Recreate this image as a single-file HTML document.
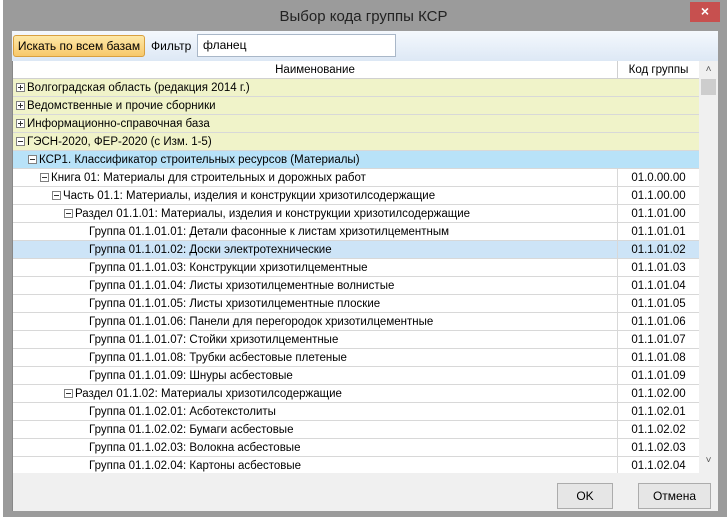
<!DOCTYPE html><html><head><meta charset="utf-8"><style>
*{box-sizing:border-box;margin:0;padding:0}
body{width:727px;height:517px;overflow:hidden;background:#fff;font-family:"Liberation Sans","DejaVu Sans",sans-serif;font-size:11.5px;color:#000;position:relative}
.a{position:absolute}
.row{position:absolute;left:13px;width:686px;height:18px;border-bottom:1px solid #d8d8d8;white-space:nowrap;line-height:19px}
.row .c{position:absolute;left:604px;top:0;width:82px;height:18px;border-left:1px solid #d8d8d8;text-align:center}
.row .t{position:absolute;top:0}
.pm{display:inline-block;width:9px;height:9px;border:1px solid #808080;position:relative;vertical-align:-1px;margin-right:2px;background:#fff}
.pm:before{content:"";position:absolute;left:1px;top:3px;width:5px;height:1px;background:#333}
.pm.p:after{content:"";position:absolute;left:3px;top:1px;width:1px;height:5px;background:#333}
.y{background:#f0f3c9}.b{background:#b8e2f8}.s{background:#cde4f7}
.btn{position:absolute;background:#e6e6e6;border:1px solid #acacac;text-align:center;line-height:24px;font-size:12px}
</style></head><body>
<div class="a" style="left:3px;top:0;width:724px;height:517px;background:#9b9b9b"></div>
<div class="a" style="left:0;top:0;width:3px;height:517px;background:#fff"></div>
<div class="a" style="left:0;top:0;width:727px;height:31px;text-align:center;font-size:15px;line-height:34px;color:#222">Выбор кода группы КСР</div>
<div class="a" style="left:690px;top:2px;width:30px;height:20px;background:#c7504f;color:#fff;text-align:center;line-height:19px;font-size:14px;font-weight:bold">×</div>
<div class="a" style="left:12px;top:31px;width:706px;height:30px;background:linear-gradient(#f4f8fd,#dde8f5)"></div>
<div class="a" style="left:13px;top:35px;width:132px;height:22px;background:linear-gradient(#fde8a8,#f8c86a);border:1px solid #d8a040;border-radius:3px;text-align:center;line-height:20px;font-size:12px">Искать по всем базам</div>
<div class="a" style="left:151px;top:36px;line-height:20px;font-size:12px">Фильтр</div>
<div class="a" style="left:197px;top:34px;width:199px;height:23px;background:#fff;border:1px solid #a9b7c8;padding-left:5px;line-height:21px;font-size:12px">фланец</div>
<div class="a" style="left:12px;top:61px;width:706px;height:412px;background:#fff;border-left:1px solid #888"></div>
<div class="a" style="left:13px;top:61px;width:686px;height:18px;background:#fff;border-bottom:1px solid #d0d0d0;line-height:19px">
<div class="a" style="left:0;width:604px;text-align:center">Наименование</div>
<div class="a" style="left:604px;width:82px;text-align:center;border-left:1px solid #d0d0d0;height:18px">Код группы</div></div>
<div class="a" style="left:699px;top:61px;width:19px;height:412px;background:#f0f0f0"></div>
<div class="a" style="left:701px;top:79px;width:15px;height:16px;background:#cdcdcd"></div>
<div class="a" style="left:699px;top:64px;width:19px;text-align:center;font-size:10px;color:#555">˄</div>
<div class="a" style="left:699px;top:455px;width:19px;text-align:center;font-size:10px;color:#555">˅</div>
<div class="a" style="left:13px;top:79px;width:686px;height:394px;overflow:hidden">
<div style="position:relative;top:-79px;left:-13px">
<div class="row y" style="top:79px"><span class="t" style="left:3px"><i class="pm p"></i>Волгоградская область (редакция 2014 г.)</span></div>
<div class="row y" style="top:97px"><span class="t" style="left:3px"><i class="pm p"></i>Ведомственные и прочие сборники</span></div>
<div class="row y" style="top:115px"><span class="t" style="left:3px"><i class="pm p"></i>Информационно-справочная база</span></div>
<div class="row y" style="top:133px"><span class="t" style="left:3px"><i class="pm"></i>ГЭСН-2020, ФЕР-2020 (с Изм. 1-5)</span></div>
<div class="row b" style="top:151px"><span class="t" style="left:15px"><i class="pm"></i>КСР1. Классификатор строительных ресурсов (Материалы)</span></div>
<div class="row" style="top:169px"><span class="t" style="left:27px"><i class="pm"></i>Книга 01: Материалы для строительных и дорожных работ</span><span class="c">01.0.00.00</span></div>
<div class="row" style="top:187px"><span class="t" style="left:39px"><i class="pm"></i>Часть 01.1: Материалы, изделия и конструкции хризотилсодержащие</span><span class="c">01.1.00.00</span></div>
<div class="row" style="top:205px"><span class="t" style="left:51px"><i class="pm"></i>Раздел 01.1.01: Материалы, изделия и конструкции хризотилсодержащие</span><span class="c">01.1.01.00</span></div>
<div class="row" style="top:223px"><span class="t" style="left:76px">Группа 01.1.01.01: Детали фасонные к листам хризотилцементным</span><span class="c">01.1.01.01</span></div>
<div class="row s" style="top:241px"><span class="t" style="left:76px">Группа 01.1.01.02: Доски электротехнические</span><span class="c">01.1.01.02</span></div>
<div class="row" style="top:259px"><span class="t" style="left:76px">Группа 01.1.01.03: Конструкции хризотилцементные</span><span class="c">01.1.01.03</span></div>
<div class="row" style="top:277px"><span class="t" style="left:76px">Группа 01.1.01.04: Листы хризотилцементные волнистые</span><span class="c">01.1.01.04</span></div>
<div class="row" style="top:295px"><span class="t" style="left:76px">Группа 01.1.01.05: Листы хризотилцементные плоские</span><span class="c">01.1.01.05</span></div>
<div class="row" style="top:313px"><span class="t" style="left:76px">Группа 01.1.01.06: Панели для перегородок хризотилцементные</span><span class="c">01.1.01.06</span></div>
<div class="row" style="top:331px"><span class="t" style="left:76px">Группа 01.1.01.07: Стойки хризотилцементные</span><span class="c">01.1.01.07</span></div>
<div class="row" style="top:349px"><span class="t" style="left:76px">Группа 01.1.01.08: Трубки асбестовые плетеные</span><span class="c">01.1.01.08</span></div>
<div class="row" style="top:367px"><span class="t" style="left:76px">Группа 01.1.01.09: Шнуры асбестовые</span><span class="c">01.1.01.09</span></div>
<div class="row" style="top:385px"><span class="t" style="left:51px"><i class="pm"></i>Раздел 01.1.02: Материалы хризотилсодержащие</span><span class="c">01.1.02.00</span></div>
<div class="row" style="top:403px"><span class="t" style="left:76px">Группа 01.1.02.01: Асботекстолиты</span><span class="c">01.1.02.01</span></div>
<div class="row" style="top:421px"><span class="t" style="left:76px">Группа 01.1.02.02: Бумаги асбестовые</span><span class="c">01.1.02.02</span></div>
<div class="row" style="top:439px"><span class="t" style="left:76px">Группа 01.1.02.03: Волокна асбестовые</span><span class="c">01.1.02.03</span></div>
<div class="row" style="top:457px"><span class="t" style="left:76px">Группа 01.1.02.04: Картоны асбестовые</span><span class="c">01.1.02.04</span></div>
</div></div>
<div class="a" style="left:12px;top:473px;width:706px;height:38px;background:#f0f0f0;border-left:1px solid #888"></div>
<div class="btn" style="left:557px;top:483px;width:56px;height:26px">OK</div>
<div class="btn" style="left:638px;top:483px;width:73px;height:26px">Отмена</div>
</body></html>
